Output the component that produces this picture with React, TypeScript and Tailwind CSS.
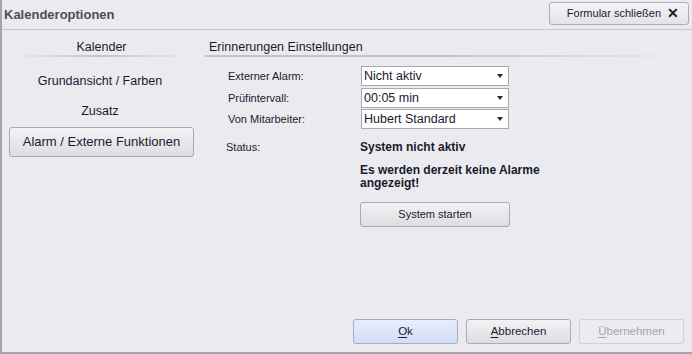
const font = { fontFamily: '"Liberation Sans", Arial, sans-serif' };

function Select({ value }: { value: string }) {
  return (
    <div className="flex h-[20px] w-[148px] items-center justify-between border border-[#a9a9b1] bg-white pl-[2px] pr-[5px] text-[12.5px] text-[#1a1a2e]">
      <span>{value}</span>
      <span className="block h-0 w-0 border-x-[3px] border-t-[4px] border-x-transparent border-t-[#2a2a2a]" />
    </div>
  );
}

function Btn({
  children,
  className = "",
  variant = "default",
}: {
  children: React.ReactNode;
  className?: string;
  variant?: "default" | "primary" | "disabled";
}) {
  const styles =
    variant === "primary"
      ? "border-[#a6adbd] bg-gradient-to-b from-[#e6eefc] to-[#d2def7] text-[#1a1a2e]"
      : variant === "disabled"
      ? "border-[#cfd0d8] bg-[#ececf0] text-[#a3a3b3]"
      : "border-[#a9a9b3] bg-gradient-to-b from-[#f3f3f5] to-[#dddde2] text-[#1a1a2e]";
  return (
    <button className={`flex items-center justify-center rounded-[3px] border ${styles} ${className}`}>
      {children}
    </button>
  );
}

export default function App() {
  return (
    <div
      style={font}
      className="flex h-[354px] w-[692px] flex-col border-b-2 border-l-2 border-[#a4a4ae] bg-[#ebebef] text-[#1a1a2e]"
    >
      {/* Title bar */}
      <div className="flex h-[30px] shrink-0 items-center justify-between border-b border-[#c6c6ce] pl-[2px] pr-[3px]">
        <span className="text-[13px] font-bold text-[#4b4b5b]">Kalenderoptionen</span>
        <button className="mb-[3px] flex h-[23px] w-[140px] items-center justify-end gap-[6px] rounded-[3px] border border-[#adadb5] bg-gradient-to-b from-[#f4f4f6] to-[#e3e3e7] pr-[9px] text-[11px] text-[#1a1a2e]">
          <span>Formular schließen</span>
          <span className="text-[14px] font-bold leading-none">✕</span>
        </button>
      </div>

      {/* Body */}
      <div className="flex flex-1">
        {/* Left nav */}
        <div className="flex w-[196px] shrink-0 flex-col pt-[10px] text-[12.5px]">
          <div className="ml-[8px] w-[183px] text-center leading-[14px]">Kalender</div>
          <div className="ml-[8px] mt-[1px] h-[2px] w-[183px] bg-gradient-to-r from-[#ebebef] via-[#c3c3cb] to-[#ebebef]" />
          <div className="mt-[9px] flex h-[30px] w-[196px] items-center justify-center">Grundansicht / Farben</div>
          <div className="flex h-[30px] w-[196px] items-center justify-center">Zusatz</div>
          <Btn className="ml-[7px] mt-[1px] h-[30px] w-[185px] text-[13px]">Alarm / Externe Funktionen</Btn>
        </div>

        {/* Right content */}
        <div className="flex flex-1 flex-col pt-[10px]">
          <div className="ml-[11px] text-[12.5px] leading-[14px]">Erinnerungen Einstellungen</div>
          <div className="ml-[7px] mr-[4px] mt-[1px] h-[2px] bg-gradient-to-r from-[#c3c3cb] via-[#c3c3cb] to-[#ebebef]" />

          <div className="ml-[30px] mt-[9px] flex flex-col">
            {[
              ["Externer Alarm:", "Nicht aktiv"],
              ["Prüfintervall:", "00:05 min"],
              ["Von Mitarbeiter:", "Hubert Standard"],
            ].map(([label, value], i) => (
              <div
                key={label}
                className={`flex items-center ${i === 1 ? "mt-[2px]" : i === 2 ? "mt-[1px]" : ""}`}
              >
                <span className="w-[133px] text-[11px]">{label}</span>
                <Select value={value} />
              </div>
            ))}
          </div>

          <div className="ml-[28px] mt-[11px] flex">
            <span className="w-[134px] text-[11px] leading-[14px]">Status:</span>
            <div className="flex flex-col">
              <span className="text-[12px] font-bold leading-[14px]">System nicht aktiv</span>
              <span className="mt-[10px] w-[200px] text-[12px] font-bold leading-[13px]">
                Es werden derzeit keine Alarme angezeigt!
              </span>
              <Btn className="mt-[12px] h-[25px] w-[150px] text-[11px]">System starten</Btn>
            </div>
          </div>

          <div className="mb-[8px] mr-[8px] mt-auto flex justify-end gap-[8px] text-[11.5px]">
            <Btn variant="primary" className="h-[25px] w-[105px]">
              <span className="underline underline-offset-2">O</span>k
            </Btn>
            <Btn className="h-[25px] w-[105px]">
              <span className="underline underline-offset-2">A</span>bbrechen
            </Btn>
            <Btn variant="disabled" className="h-[25px] w-[105px]">
              <span className="underline underline-offset-2">Ü</span>bernehmen
            </Btn>
          </div>
        </div>
      </div>
    </div>
  );
}
